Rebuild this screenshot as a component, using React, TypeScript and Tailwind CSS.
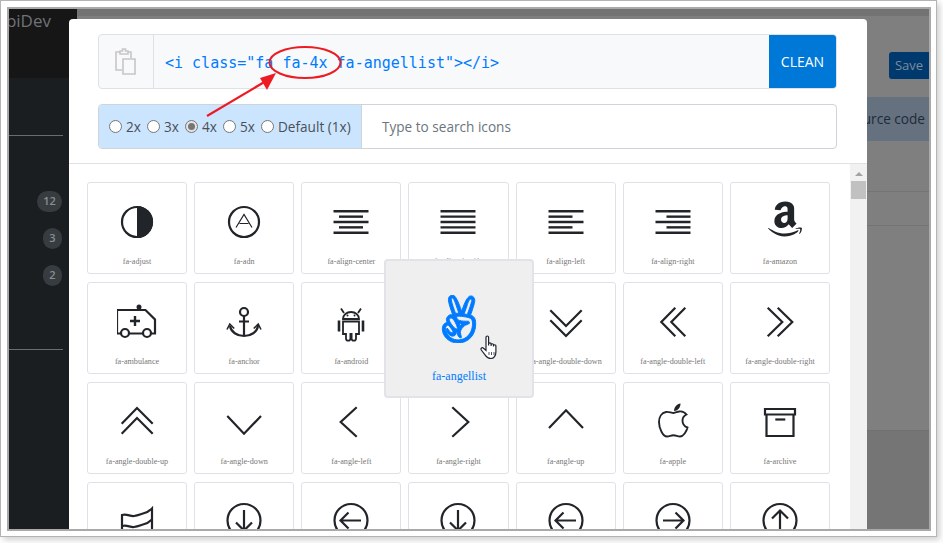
import type { ReactNode } from 'react';
import { FaAmazon, FaAngellist } from 'react-icons/fa';

const ink = '#212529';

// all line icons are drawn on a 40x40 box
function Line({ children, sw = 2.2 }: { children: ReactNode; sw?: number }) {
  return (
    <svg width="40" height="40" viewBox="0 0 40 40" fill="none" stroke={ink} strokeWidth={sw}>
      {children}
    </svg>
  );
}

function Bars({ rows }: { rows: [number, number][] }) {
  return (
    <Line sw={2.4}>
      {rows.map(([a, b], i) => (
        <path key={i} d={`M${a} ${9.3 + i * 5.35}H${b}`} />
      ))}
    </Line>
  );
}

function CircleArrow({ d }: { d: string }) {
  return (
    <Line>
      <circle cx="20" cy="18.5" r="16.5" />
      <path d={d} />
    </Line>
  );
}

const icons: { name: string; icon: ReactNode }[] = [
  {
    name: 'fa-adjust',
    icon: (
      <Line>
        <circle cx="20" cy="20" r="15" />
        <path d="M20 4a16 16 0 0 1 0 32z" fill={ink} stroke="none" />
      </Line>
    ),
  },
  {
    name: 'fa-adn',
    icon: (
      <Line>
        <circle cx="20" cy="20" r="15" />
        <path d="M12 25.500 20 12.500l8 13M15.500 21.500h9" strokeWidth="1.2" />
      </Line>
    ),
  },
  { name: 'fa-align-center', icon: <Bars rows={[[2.5, 37.5], [8, 32], [2.5, 37.5], [8, 32], [2.5, 37.5]]} /> },
  { name: 'fa-align-justify', icon: <Bars rows={[[2.5, 37.5], [2.5, 37.5], [2.5, 37.5], [2.5, 37.5], [2.5, 37.5]]} /> },
  { name: 'fa-align-left', icon: <Bars rows={[[2.5, 37.5], [2.5, 26.5], [2.5, 37.5], [2.5, 26.5], [2.5, 37.5]]} /> },
  { name: 'fa-align-right', icon: <Bars rows={[[2.5, 37.5], [13.5, 37.5], [2.5, 37.5], [13.5, 37.5], [2.5, 37.5]]} /> },
  { name: 'fa-amazon', icon: <FaAmazon size={40} color={ink} className="shrink-0 translate-x-[5px] -translate-y-[3px]" /> },
  {
    name: 'fa-ambulance',
    icon: (
      <Line>
        <path d="M4 31.500H0V8h28.500L38 17.500v14h-3.500M12.500 31.500h13.500" />
        <circle cx="8" cy="31" r="4" />
        <circle cx="30" cy="31" r="4" />
        <path d="M18 14v10M13 19h10" strokeWidth="2.4" />
        <circle cx="22" cy="5" r="2.500" fill={ink} stroke="none" />
      </Line>
    ),
  },
  {
    name: 'fa-anchor',
    icon: (
      <Line>
        <circle cx="20" cy="10" r="4" />
        <path d="M20 14v20M15 19.500h10M6 24c1 6 7 10 14 10s13-4 14-10" />
        <path d="M3 27.500 5.800 22l4.400 4.500M37 27.500 34.200 22l-4.400 4.500" strokeWidth="1.6" />
      </Line>
    ),
  },
  {
    name: 'fa-android',
    icon: (
      <Line sw={1.8}>
        <path d="M12 17a8 7 0 0 1 16 0z" />
        <path d="M13 11 10 6.500M27 11l3-4.500" />
        <path d="M12 19.500h16V32h-3v4.500a2.200 2.200 0 0 1-4.400 0V32h-1.200v4.500a2.200 2.200 0 0 1-4.400 0V32h-3z" />
        <path d="M8 18.500v11M32 18.500v11" strokeWidth="2.6" />
        <circle cx="16.500" cy="13.500" r="1" fill={ink} stroke="none" />
        <circle cx="23.500" cy="13.500" r="1" fill={ink} stroke="none" />
      </Line>
    ),
  },
  { name: 'fa-angellist', icon: null },
  {
    name: 'fa-angle-double-down',
    icon: <Line><path d="M4.300 8.300 20 24 35.700 8.300M4.300 18.300 20 34l15.700-15.700" /></Line>,
  },
  {
    name: 'fa-angle-double-left',
    icon: <Line><path d="M32.300 5.700 18.300 20l14 14.300M22.300 5.700 8.300 20l14 14.300" /></Line>,
  },
  {
    name: 'fa-angle-double-right',
    icon: <Line><path d="M7.700 5.700 22.300 20 7.700 34.300M17.700 5.700 32.300 20 17.700 34.300" /></Line>,
  },
  {
    name: 'fa-angle-double-up',
    icon: <Line><path d="M4.700 31.700 20 16l15.700 15.700M4.700 21.700 20 6l15.700 15.700" /></Line>,
  },
  { name: 'fa-angle-down', icon: <Line><path d="M3.300 14 20 31.700 37 14" /></Line> },
  { name: 'fa-angle-left', icon: <Line><path d="M25.700 5.300 9.700 20l16 14.700" /></Line> },
  { name: 'fa-angle-right', icon: <Line><path d="M14.300 5.300 30.300 20l-16 14.700" /></Line> },
  { name: 'fa-angle-up', icon: <Line><path d="M3 26 20 8.300 37 26" /></Line> },
  {
    name: 'fa-apple',
    icon: (
      <Line sw={1.9}>
        <g transform="translate(1 0)">
          <path d="M20 11c-3 0-5-1.500-8-1C7.500 10.800 5 15 5 20c0 6.500 4 14.500 8 14.500 2.500 0 4-1.300 6.500-1.300s4 1.300 6.500 1.300c3.500 0 6.500-5 7.500-9-3-1-5-3.500-5-7 0-3 2-5 4-6-2-2.500-5-3.500-7.500-3-2 .300-3.500 1.500-5.500 1.500z" />
          <path d="M20 9c0-4 3-7 6.500-7.500C26.700 5.500 23.500 9 20 9z" fill={ink} stroke="none" />
        </g>
      </Line>
    ),
  },
  {
    name: 'fa-archive',
    icon: (
      <Line>
        <path d="M5 7h30v5.500H5zM6.500 12.500V34h27V12.500" />
        <path d="M15.300 17.500h10" />
      </Line>
    ),
  },
  {
    name: 'fa-area-chart',
    icon: (
      <Line>
        <path d="M5 42V13c5-1.500 8 1.500 12 1s7-2 9-2.500 6-2 9-5V40" />
        <path d="M5 24c5-1.500 8 1.500 12 1s7-2 9-2.500 6-2 9-5" />
      </Line>
    ),
  },
  { name: 'fa-arrow-circle-down', icon: <CircleArrow d="M20 8v20M12 20.500l8 8 8-8" /> },
  { name: 'fa-arrow-circle-left', icon: <CircleArrow d="M30 18.500H10M17.500 10.500l-8 8 8 8" /> },
  { name: 'fa-arrow-circle-o-down', icon: <CircleArrow d="M20 8v20M12 20.500l8 8 8-8" /> },
  { name: 'fa-arrow-circle-o-left', icon: <CircleArrow d="M30 18.500H10M17.500 10.500l-8 8 8 8" /> },
  { name: 'fa-arrow-circle-o-right', icon: <CircleArrow d="M10 18.500h20M22.500 10.500l8 8-8 8" /> },
  { name: 'fa-arrow-circle-o-up', icon: <CircleArrow d="M20 29V9M12 16.500l8-8 8 8" /> },
];

function Radio({ label, checked, width }: { label: string; checked?: boolean; width: string }) {
  return (
    <label className={`flex items-center gap-1 ${width}`}>
      <span
        className={`flex h-[13px] w-[13px] shrink-0 items-center justify-center rounded-full border border-[#767676] ${
          checked ? 'bg-[#e4e4e4]' : 'bg-white'
        }`}
      >
        {checked && <span className="h-[7px] w-[7px] rounded-full bg-[#767676]" />}
      </span>
      <span className="whitespace-nowrap">{label}</span>
    </label>
  );
}

function Badge({ value, wide }: { value: string; wide?: boolean }) {
  return (
    <span
      className={`flex h-[21px] items-center justify-center rounded-full bg-[#373c40] text-[11px] font-semibold text-[#8b8e90] ${
        wide ? 'w-[25px]' : 'w-[19px]'
      }`}
    >
      {value}
    </span>
  );
}

function Sidebar() {
  return (
    <aside className="flex w-[68px] shrink-0 flex-col overflow-hidden bg-[#1a1e21]">
      <div className="flex h-[69px] shrink-0 justify-end overflow-hidden bg-[#161616] pr-[26px] text-[17px] leading-6 text-[#6f7378]">
        <span className="whitespace-nowrap">ApiDev</span>
      </div>
      <div className="mt-[57px] mr-[14px] h-px bg-[#6a6d70]" />
      <div className="mr-[15px] mt-[55px] flex flex-col items-end gap-4">
        <Badge value="12" wide />
        <Badge value="3" />
        <Badge value="2" />
      </div>
      <div className="mr-[14px] mt-[63px] h-px bg-[#6a6d70]" />
    </aside>
  );
}

function Backdrop() {
  return (
    <main className="flex min-w-0 flex-1 flex-col bg-[#7f7f7f]">
      <div className="h-[7px] shrink-0 bg-[#737373]" />
      <div className="mt-[36px] flex justify-end">
        <span className="flex h-[27px] w-[40px] items-center justify-center rounded-l-[3px] bg-[#00396e] text-[13px] text-[#7d8c99]">
          Save
        </span>
      </div>
      <div className="mt-[18px] flex h-[44px] shrink-0 items-center justify-end overflow-hidden bg-[#66717f] pr-[4px] text-[13.6px] text-[#1d2a3a]">
        Source code
      </div>
      <div className="mt-[50px] h-px bg-[#747474]" />
      <div className="mt-[33px] h-px bg-[#747474]" />
      <div className="mt-[204px] flex-1 border-t border-[#707070] bg-[#757575]" />
    </main>
  );
}

function ClipboardIcon() {
  return (
    <svg width="24" height="28" viewBox="0 0 24 28" fill="none" stroke="#c6c6c6" strokeWidth="1.6">
      <path d="M9 22H3V4h15v6" />
      <path d="M7 6V3h2.500V1h3v2H15v3z" fill="#f8f9fa" />
      <path d="M10 11h12v15H10z" fill="#f8f9fa" />
    </svg>
  );
}

function Modal() {
  return (
    <section className="absolute left-[60px] top-[10px] h-[600px] w-[798px] rounded-t-[4px] bg-white">
      <div className="pl-[29px] pr-[30px] pt-[15px]">
        <div className="flex h-[55px] overflow-hidden rounded-[4px] border border-[#dee2e6] bg-[#f8f9fa]">
          <div className="flex w-[55px] shrink-0 items-center justify-center border-r border-[#dee2e6] pr-[2px]">
            <ClipboardIcon />
          </div>
          <div className="flex flex-1 items-center pl-[11px] pt-[3px] font-['DejaVu_Sans_Mono',monospace] text-[15px] text-[#007bff]">
            {'<i class="fa fa-4x fa-angellist"></i>'}
          </div>
          <button className="w-[67px] shrink-0 bg-[#0078d7] text-[14px] font-medium text-white">CLEAN</button>
        </div>
        <div className="mt-[15px] flex h-[45px] overflow-hidden rounded-[4px] border border-[#ced4da] pt-0 text-[13.6px]">
          <div className="flex w-[263px] shrink-0 items-center border-r border-[#ced4da] bg-[#cce5ff] pl-[10px] pt-[1px] text-[#495057]">
            <Radio label="2x" width="w-[38px]" />
            <Radio label="3x" width="w-[38px]" />
            <Radio label="4x" width="w-[38px]" checked />
            <Radio label="5x" width="w-[38px]" />
            <Radio label="Default (1x)" width="w-[90px]" />
          </div>
          <div className="flex flex-1 items-center pl-5 pt-[1px] text-[#6c757d]">Type to search icons</div>
        </div>
      </div>
      <div className="mt-[14px] flex h-[400px] border-t border-[#dee2e6]">
        <div className="flex-1 pl-[18px] pr-[20px] pt-[18px]">
          <div className="grid grid-cols-7 gap-x-[7.17px] gap-y-2">
            {icons.map((item) => (
              <div
                key={item.name}
                className="flex h-[92px] flex-col items-center rounded-[3px] border border-[#dee2e6] bg-white pt-[19px]"
              >
                <div className="flex h-10 w-10 items-center justify-center">{item.icon}</div>
                <span className="mt-[14px] whitespace-nowrap font-['Liberation_Serif',serif] text-[8.15px] leading-3 text-[#777]">
                  {item.name}
                </span>
              </div>
            ))}
          </div>
        </div>
        <div className="flex w-[17px] shrink-0 flex-col items-center bg-[#f1f1f1] pt-[8px]">
          <span className="h-0 w-0 border-x-[4px] border-b-[4px] border-x-transparent border-b-[#a3a3a3]" />
          <span className="mt-[5px] h-[18px] w-[15px] bg-[#c1c1c1]" />
        </div>
      </div>

      {/* hovered icon */}
      <div className="absolute left-[315px] top-[240px] flex h-[139px] w-[150px] flex-col items-center rounded-[4px] border-2 border-[#e2e3e8] bg-[#efeff0] pt-[34px]">
        <FaAngellist size={48} color="#007bff" stroke="#007bff" strokeWidth={10} />
        <span className="mt-[25px] font-['Liberation_Serif',serif] text-[12px] leading-4 text-[#007bff]">
          fa-angellist
        </span>
      </div>
      <svg
        className="absolute left-[411px] top-[316px]"
        width="20"
        height="25"
        viewBox="0 0 20 25"
        fill="#fff"
        stroke="#1f2430"
        strokeWidth="1.2"
      >
        <path d="M6 2.200c0-1.600 2.600-1.600 2.600 0V10.500V9c0-1.500 2.500-1.500 2.500 0v2V9.800c0-1.400 2.400-1.400 2.400 0v1.700-.8c0-1.300 2.400-1.300 2.400 0V17c0 3.500-2 6.500-5 6.500-2.800 0-4-1-5.500-3.200L1.300 15c-1-1.500.8-3 2.200-1.800L6 15.500z" />
        <path d="M9 17v3M11.500 17v3M14 17v3" strokeWidth="0.8" />
      </svg>
    </section>
  );
}

function Annotation() {
  return (
    <svg className="absolute left-0 top-0" width="943" height="543" fill="none">
      <ellipse cx="305" cy="62.500" rx="35.500" ry="15.500" stroke="#ed1c24" strokeWidth="2" />
      <path d="M207 116 266 81" stroke="#ed1c24" strokeWidth="2.200" />
      <path d="M276 73 260 78 267 90z" fill="#ed1c24" />
    </svg>
  );
}

export default function App() {
  return (
    <div className="relative h-[543px] w-[943px] overflow-hidden bg-white font-['Open_Sans',sans-serif]">
      <div className="h-[537px] w-[937px] border border-[#b4b4b4] bg-white pb-[5px] pl-[6px] pr-[5px] pt-[6px] shadow-[3px_3px_6px_rgba(0,0,0,0.18)]">
        <div className="relative flex h-[524px] w-[924px] overflow-hidden border-2 border-[#a9a9a9]">
          <Sidebar />
          <Backdrop />
          <Modal />
        </div>
      </div>
      <Annotation />
    </div>
  );
}
